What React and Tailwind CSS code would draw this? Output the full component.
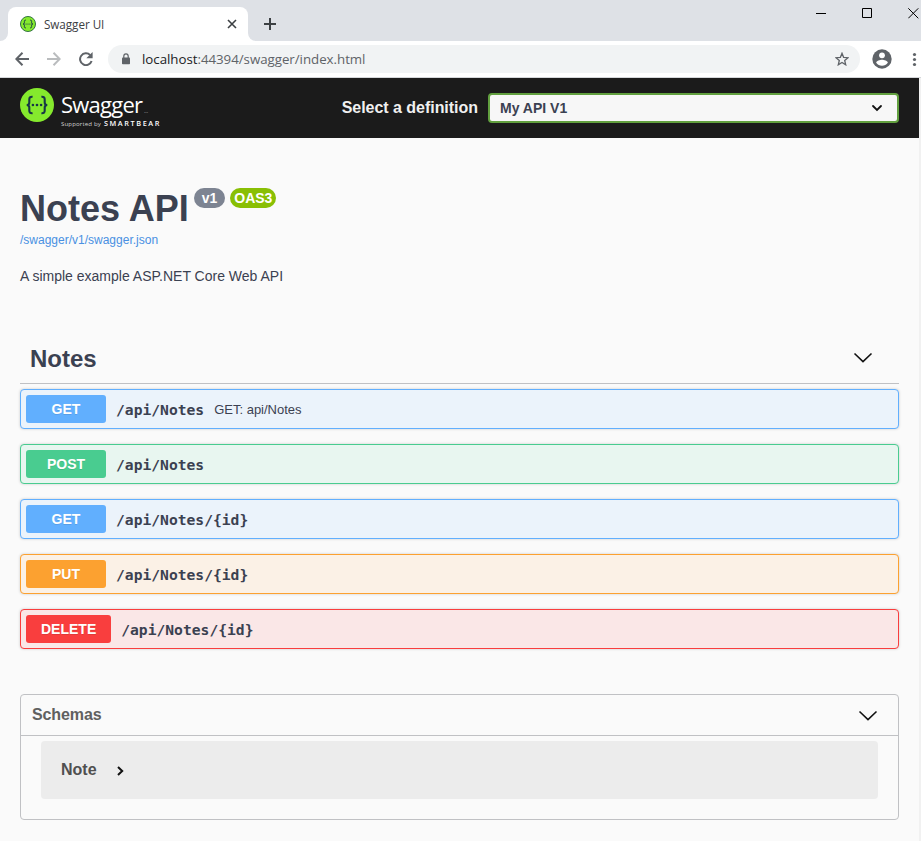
const operations = [
  { method: 'GET', path: '/api/Notes', note: 'GET: api/Notes', row: 'border-[#61affe] bg-[#ebf3fb]', badge: 'bg-[#61affe]' },
  { method: 'POST', path: '/api/Notes', row: 'border-[#49cc90] bg-[#e8f6f0]', badge: 'bg-[#49cc90]' },
  { method: 'GET', path: '/api/Notes/{id}', row: 'border-[#61affe] bg-[#ebf3fb]', badge: 'bg-[#61affe]' },
  { method: 'PUT', path: '/api/Notes/{id}', row: 'border-[#fca130] bg-[#fbf1e6]', badge: 'bg-[#fca130]' },
  { method: 'DELETE', path: '/api/Notes/{id}', row: 'border-[#f93e3e] bg-[#fae7e7]', badge: 'bg-[#f93e3e]' },
];

function Chevron({ className }) {
  return (
    <svg className={className} width="20" height="12" viewBox="0 0 20 12" fill="none" stroke="#111" strokeWidth="1.6">
      <path d="M1.5 1.5 10 9.7 18.5 1.5" />
    </svg>
  );
}

function Braces({ size, className, outline }) {
  return (
    <svg className={className} width={size} height={size} viewBox="0 0 34 34" fill="none">
      <circle cx="17" cy="17" r={outline ? 16 : 17} fill="#85ea2d" stroke={outline ? '#2b6b3d' : 'none'} strokeWidth="2" />
      <g stroke="#173647" strokeWidth="2.1">
        <path d="M12.6 8.8c-2.4-.2-3.4.7-3.3 2.8v2.8c0 1.7-.8 2.6-2.6 2.6 1.8 0 2.6.9 2.6 2.6v2.8c-.1 2.1.9 3 3.3 2.8" />
        <path d="M21.4 8.8c2.4-.2 3.4.7 3.3 2.8v2.8c0 1.7.8 2.6 2.6 2.6-1.8 0-2.6.9-2.6 2.6v2.8c.1 2.1-.9 3-3.3 2.8" />
      </g>
      <g fill="#173647">
        <circle cx="12.9" cy="17" r="1.3" />
        <circle cx="17" cy="17" r="1.3" />
        <circle cx="21.1" cy="17" r="1.3" />
      </g>
    </svg>
  );
}

function TabStrip() {
  return (
    <div className="flex h-[41px] bg-[#dee1e6]">
      <div className="flex w-2 items-end bg-white">
        <div className="h-full w-2 rounded-br-lg bg-[#dee1e6]" />
      </div>
      <div className="flex h-full w-[240px] bg-[#dee1e6] pt-[7px]">
        <div className="flex h-[34px] w-full items-center rounded-t-lg bg-white pl-3 pr-[11px]">
          <Braces size={16} outline />
          <span className="ml-2 flex-1 whitespace-nowrap pb-px font-['Open_Sans','Noto_Sans',sans-serif] text-[11.7px] leading-4 tracking-[-0.05px] text-[#3c4043]">Swagger UI</span>
          <svg width="10" height="10" viewBox="0 0 10 10" stroke="#3c4043" strokeWidth="1.6">
            <path d="m1 1 8 8M9 1 1 9" />
          </svg>
        </div>
      </div>
      <div className="w-2 bg-white">
        <div className="h-full w-2 rounded-bl-lg bg-[#dee1e6]" />
      </div>
      <svg className="ml-2 mt-[18px]" width="12" height="12" viewBox="0 0 12 12" stroke="#3c4043" strokeWidth="2">
        <path d="M6 0v12M0 6h12" />
      </svg>
      <div className="ml-auto flex pt-2">
        <svg className="mr-[35px]" width="11" height="11" viewBox="0 0 11 11" stroke="#000"><path d="M0 5.5h10" /></svg>
        <svg className="mr-[35px]" width="11" height="11" viewBox="0 0 11 11" fill="none" stroke="#000"><path d="M.5.5h9v9h-9z" /></svg>
        <svg className="mr-[2px]" width="11" height="11" viewBox="0 0 11 11" stroke="#000"><path d="m.3.3 10 10M10.3.3l-10 10" /></svg>
      </div>
    </div>
  );
}

function Toolbar() {
  return (
    <div className="flex h-[37px] border-b border-[#d5d7da] bg-white">
      <svg className="ml-[15px] mt-[11px]" width="14" height="14" viewBox="0 0 14 14" fill="none" stroke="#5f6368" strokeWidth="2">
        <path d="M14 7H1.5M7.5.8 1.3 7l6.2 6.2" />
      </svg>
      <svg className="ml-[18px] mt-[11px]" width="14" height="14" viewBox="0 0 14 14" fill="none" stroke="#babcbe" strokeWidth="2">
        <path d="M0 7h12.5M6.5.8 12.7 7l-6.2 6.2" />
      </svg>
      <svg className="ml-[17px] mt-[11px]" width="16" height="14" viewBox="0 0 16 14" fill="none">
        <path d="M12.2 3.1A5.9 5.9 0 1 0 13.6 9" stroke="#5f6368" strokeWidth="2" />
        <path d="M14.6 0v6.3H8.3z" fill="#5f6368" />
      </svg>
      <div className="ml-[14px] mt-1 flex h-7 w-[752px] items-center rounded-full bg-[#f1f3f4] pl-[14px] pr-[11px]">
        <svg width="8" height="12" viewBox="0 0 8 12" fill="none">
          <path d="M1.8 5V3.2a2.2 2.4 0 0 1 4.4 0V5" stroke="#5f6368" strokeWidth="1.2" />
          <rect y="4.4" width="8" height="6.8" rx=".8" fill="#5f6368" />
        </svg>
        <span className="ml-3 flex-1 whitespace-nowrap font-['Open_Sans','Noto_Sans',sans-serif] text-[13.3px] leading-5 tracking-[-0.03px] text-[#5f6368]">
          <span className="text-[#202124]">localhost</span>:44394/swagger/index.html
        </span>
        <svg width="14" height="14" viewBox="0 0 14 14" fill="none" stroke="#5f6368" strokeWidth="1.3">
          <path d="m7 1.3 1.6 4 4.4.4-3.3 2.8 1 4.3L7 10.5l-3.7 2.3 1-4.3L1 5.7l4.4-.4z" />
        </svg>
      </div>
      <svg className="ml-3 mt-[8px]" width="20" height="20" viewBox="0 0 20 20">
        <circle cx="10" cy="10" r="9.7" fill="#5f6368" />
        <circle cx="10" cy="6.3" r="2.9" fill="#fff" />
        <path d="M4.2 13.7c0-2 3.8-3 5.8-3s5.8 1 5.8 3a7 7 0 0 1-11.6 0" fill="#fff" />
      </svg>
      <svg className="ml-[20px] mt-[11px]" width="5" height="15" viewBox="0 0 5 15" fill="#5f6368">
        <circle cx="2.5" cy="2.5" r="1.6" />
        <circle cx="2.5" cy="7.5" r="1.6" />
        <circle cx="2.5" cy="12.5" r="1.6" />
      </svg>
    </div>
  );
}

function TopBar() {
  return (
    <header className="flex h-[60px] bg-[#1b1b1b] pl-5 pr-5">
      <Braces size={34} className="mt-[10px]" />
      <div className="ml-[7px] flex w-[110px] flex-col whitespace-nowrap pt-[13px] font-['Open_Sans','Noto_Sans',sans-serif] text-white">
        <div className="flex h-[27px] items-baseline text-[22px] font-normal leading-[27px] tracking-[-0.75px]">
          Swagger<span className="ml-[2px] text-[2.5px] tracking-normal text-[#aaa]">TM</span>
        </div>
        <div className="flex h-[10px] items-baseline leading-[10px]">
          <span className="text-[6.1px] tracking-[0.13px] text-[#d0d0d0]">Supported by</span>
          <span className="ml-[3px] text-[7.3px] font-semibold tracking-[1.6px]">SMARTBEAR</span>
        </div>
      </div>
      <div className="ml-auto flex">
        <span className="whitespace-nowrap pr-[10px] pt-[21px] text-base font-bold leading-[18px] tracking-[-0.03px] text-[#f0f0f0]">Select a definition</span>
        <div className="mt-[15px] flex h-[30px] w-[411px] items-center justify-between rounded border-2 border-[#62a03f] bg-[#f7f7f7] pl-[10px] pr-[14px]">
          <span className="text-sm font-bold leading-4 text-[#3b4151]">My API V1</span>
          <svg width="12" height="8" viewBox="0 0 12 8" fill="none" stroke="#111" strokeWidth="1.8" strokeLinecap="round">
            <path d="m2 2 4 4 4-4" />
          </svg>
        </div>
      </div>
    </header>
  );
}

function Operation({ op }) {
  return (
    <div className={`flex h-10 items-center rounded border px-[5px] shadow-[0_0_3px_rgba(0,0,0,0.19)] ${op.row}`}>
      <span className={`flex h-7 min-w-20 items-center justify-center rounded-[3px] px-[15px] text-sm font-bold [text-shadow:0_1px_0_rgba(0,0,0,0.1)] text-white ${op.badge}`}>
        {op.method}
      </span>
      <span className="ml-[10px] pt-px font-['DejaVu_Sans_Mono',monospace] text-[14.65px] font-bold leading-5 text-[#3b4151]">{op.path}</span>
      {op.note && <span className="ml-[10px] pt-[2px] text-[13px] leading-4 text-[#3b4151]">{op.note}</span>}
    </div>
  );
}

export default function App() {
  return (
    <div className="h-[841px] w-[921px] overflow-hidden bg-[#fafafa] font-['Liberation_Sans',Arial,sans-serif]">
      <TabStrip />
      <Toolbar />
      <div className="h-[763px] border-r-2 border-[#f1f1f1]">
        <TopBar />
        <main className="px-5 text-[#3b4151]">
          <section className="h-[192px] pt-[50px]">
            <div className="flex h-[44px] items-start">
              <h1 className="whitespace-nowrap text-4xl font-bold leading-[42px]">Notes API</h1>
              <span className="ml-[5px] flex h-5 items-center rounded-full bg-[#7d8492] px-2 text-sm font-bold text-white">v1</span>
              <span className="ml-[5px] flex h-5 items-center rounded-full bg-[#89bf04] px-1 text-sm font-bold text-white">OAS3</span>
            </div>
            <a className="block text-xs leading-4 text-[#4990e2]">/swagger/v1/swagger.json</a>
            <p className="mt-5 text-sm leading-4">A simple example ASP.NET Core Web API</p>
          </section>
          <h2 className="flex h-[54px] items-start justify-between border-b border-[#c0c1c4] pl-[10px] pr-[26px] text-2xl font-bold leading-7">
            <span className="pt-[15px]">Notes</span>
            <Chevron className="mt-[22px]" />
          </h2>
          <div className="mt-[5px] flex flex-col gap-[15px]">
            {operations.map((op) => (
              <Operation key={op.method + op.path} op={op} />
            ))}
          </div>
          <section className="mt-[45px] h-[126px] rounded border border-[#c0c1c4]">
            <h4 className="flex h-[41px] items-center justify-between border-b border-[#c0c1c4] pl-[11px] pr-[20px] text-base font-bold leading-5 tracking-[-0.1px] text-[#606060]">
              Schemas
              <Chevron className="mt-[2px]" />
            </h4>
            <div className="mx-5 mt-[5px] flex h-[58px] items-center rounded bg-[#ececec] pl-5 text-base font-bold text-[#505050]">
              Note
              <svg className="ml-5 mt-[2px]" width="8" height="12" viewBox="0 0 8 12" fill="none" stroke="#111" strokeWidth="2">
                <path d="m1 2 4.2 4L1 10" />
              </svg>
            </div>
          </section>
        </main>
      </div>
    </div>
  );
}
